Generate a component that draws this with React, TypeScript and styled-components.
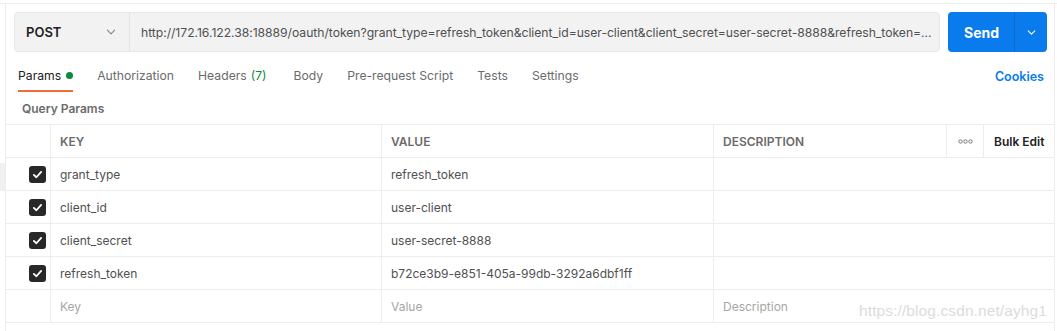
import React from "react";
import styled, { createGlobalStyle } from "styled-components";

const Global = createGlobalStyle`
  html, body { margin: 0; padding: 0; background: #fff; }
  body { font-family: Inter, "Noto Sans", sans-serif; color: #505050; }
  * { box-sizing: border-box; }
`;

const Page = styled.div`
  display: flex;
  width: 1057px;
  height: 328px;
  border-top: 1px solid #ededed;
  margin-top: 3px;
  position: relative;
  overflow: hidden;
`;

const Gutter = styled.div`
  width: 5px;
  flex: none;
  padding-top: 159px;
`;

const GutterPatch = styled.div`
  height: 28px;
  background: #f0f0f0;
`;

const Panel = styled.div`
  width: 1050px;
  flex: none;
  border-left: 1px solid #ededed;
  border-right: 1px solid #ededed;
  display: flex;
  flex-direction: column;
`;

const RequestBar = styled.div`
  display: flex;
  gap: 8px;
  padding: 8px 7px 0 8px;
`;

const UrlBox = styled.div`
  flex: 1;
  height: 40px;
  display: flex;
  background: #f2f2f2;
  border: 1px solid #e8e8e8;
  border-radius: 4px;
  overflow: hidden;
`;

const MethodSelect = styled.div`
  width: 115px;
  flex: none;
  display: flex;
  align-items: center;
  justify-content: space-between;
  padding: 0 12px 0 11px;
  border-right: 1px solid #e3e3e3;
  font-size: 13px;
  font-weight: 600;
  color: #212121;
`;

const UrlText = styled.div`
  flex: 1;
  min-width: 0;
  display: flex;
  align-items: center;
  padding: 0 4px 0 11px;
  font-size: 12.2px;
  letter-spacing: -0.04px;
  color: #505050;
  white-space: nowrap;
  overflow: hidden;
`;

const UrlInner = styled.span`
  overflow: hidden;
  text-overflow: ellipsis;
`;

const SendGroup = styled.div`
  width: 99px;
  height: 40px;
  flex: none;
  display: flex;
  background: #097bed;
  border-radius: 4px;
  color: #fff;
`;

const SendLabel = styled.div`
  flex: 1;
  display: flex;
  align-items: center;
  justify-content: center;
  font-size: 14px;
  font-weight: 700;
  border-right: 1px solid #0a6bcc;
  padding-left: 1px;
`;

const SendArrow = styled.div`
  width: 32px;
  display: flex;
  align-items: center;
  justify-content: center;
`;

const TabRow = styled.div`
  display: flex;
  align-items: stretch;
  height: 40px;
  padding: 0 10px 0 12px;
`;

const Tabs = styled.div`
  display: flex;
  gap: 24px;
  flex: 1;
`;

const Tab = styled.div<{ $active?: boolean }>`
  display: flex;
  align-items: center;
  font-size: 12.2px;
  color: ${(p) => (p.$active ? "#212121" : "#6b6b6b")};
  border-bottom: 2px solid ${(p) => (p.$active ? "#f26b3a" : "transparent")};
  padding-top: 8px;
`;

const Count = styled.span`
  color: #0b8a3d;
  margin-left: 4px;
  margin-right: 3px;
`;

const Dot = styled.span`
  width: 7px;
  height: 7px;
  border-radius: 50%;
  background: #0b8a3d;
  margin-left: 5px;
  margin-top: 1px;
`;

const Cookies = styled.div`
  display: flex;
  align-items: center;
  padding-top: 8px;
  font-size: 12.5px;
  font-weight: 600;
  color: #097bed;
`;

const SectionTitle = styled.div`
  height: 32px;
  display: flex;
  align-items: center;
  padding-left: 16px;
  font-size: 12px;
  font-weight: 600;
  color: #6b6b6b;
`;

const Table = styled.div`
  display: grid;
  grid-template-columns: 45px 331px 332px 233px 37px 1fr;
  border-top: 1px solid #ededed;
`;

const Cell = styled.div<{ $span?: number; $head?: boolean; $last?: boolean }>`
  height: 33px;
  display: flex;
  align-items: center;
  padding-left: 9px;
  border-bottom: 1px solid #ededed;
  border-right: ${(p) => (p.$last ? "none" : "1px solid #ededed")};
  grid-column: span ${(p) => p.$span ?? 1};
  font-size: 12px;
  color: ${(p) => (p.$head ? "#6b6b6b" : "#505050")};
  font-weight: ${(p) => (p.$head ? 600 : 400)};
  white-space: nowrap;
`;

const CheckCell = styled(Cell)`
  justify-content: flex-end;
  padding-left: 0;
  padding-right: 4px;
`;

const Placeholder = styled.span`
  color: #a6a6a6;
`;

const BulkEdit = styled(Cell)`
  color: #212121;
  font-weight: 600;
  padding-left: 10px;
`;

const DotsCell = styled(Cell)`
  justify-content: center;
  padding-left: 0;
`;

const Checkbox = styled.div`
  width: 17px;
  height: 17px;
  border-radius: 3px;
  background: #282828;
  display: flex;
  align-items: center;
  justify-content: center;
`;

const Watermark = styled.div`
  position: absolute;
  right: 10px;
  top: 298px;
  font-family: "Liberation Sans", Arial, sans-serif;
  font-size: 15.5px;
  color: #dcdcdc;
  letter-spacing: 0.1px;
`;

const Chevron = ({ color, size }: { color: string; size: number }) => (
  <svg width={size} height={size} viewBox="0 0 10 10" fill="none">
    <path d="M2 3.5 L5 6.5 L8 3.5" stroke={color} strokeWidth="1" strokeLinecap="round" strokeLinejoin="round" />
  </svg>
);

const Check = () => (
  <svg width="11" height="11" viewBox="0 0 12 12" fill="none">
    <path d="M2 6.4 L4.8 9 L10 3.2" stroke="#fff" strokeWidth="2" strokeLinecap="round" strokeLinejoin="round" />
  </svg>
);

const Dots = () => (
  <svg width="15" height="5" viewBox="0 0 15 5" fill="none">
    <circle cx="2.5" cy="2.5" r="1.7" stroke="#6b6b6b" strokeWidth="0.9" />
    <circle cx="7.5" cy="2.5" r="1.7" stroke="#6b6b6b" strokeWidth="0.9" />
    <circle cx="12.5" cy="2.5" r="1.7" stroke="#6b6b6b" strokeWidth="0.9" />
  </svg>
);

const params = [
  { key: "grant_type", value: "refresh_token" },
  { key: "client_id", value: "user-client" },
  { key: "client_secret", value: "user-secret-8888" },
  { key: "refresh_token", value: "b72ce3b9-e851-405a-99db-3292a6dbf1ff" },
];

export default function App() {
  return (
    <>
      <Global />
      <Page>
        <Gutter>
          <GutterPatch />
        </Gutter>
        <Panel>
          <RequestBar>
            <UrlBox>
              <MethodSelect>
                POST
                <Chevron color="#8a8a8a" size={12} />
              </MethodSelect>
              <UrlText>
                <UrlInner>
                  http://172.16.122.38:18889/oauth/token?grant_type=refresh_token&amp;client_id=user-client&amp;client_secret=user-secret-8888&amp;refresh_token=...
                </UrlInner>
              </UrlText>
            </UrlBox>
            <SendGroup>
              <SendLabel>Send</SendLabel>
              <SendArrow>
                <Chevron color="#ffffff" size={11} />
              </SendArrow>
            </SendGroup>
          </RequestBar>
          <TabRow>
            <Tabs>
              <Tab $active>
                Params
                <Dot />
              </Tab>
              <Tab>Authorization</Tab>
              <Tab>
                Headers<Count>(7)</Count>
              </Tab>
              <Tab>Body</Tab>
              <Tab>Pre-request Script</Tab>
              <Tab>Tests</Tab>
              <Tab>Settings</Tab>
            </Tabs>
            <Cookies>Cookies</Cookies>
          </TabRow>
          <SectionTitle>Query Params</SectionTitle>
          <Table>
            <Cell />
            <Cell $head>KEY</Cell>
            <Cell $head>VALUE</Cell>
            <Cell $head>DESCRIPTION</Cell>
            <DotsCell>
              <Dots />
            </DotsCell>
            <BulkEdit $last>Bulk Edit</BulkEdit>
            {params.map((p) => (
              <React.Fragment key={p.key}>
                <CheckCell>
                  <Checkbox>
                    <Check />
                  </Checkbox>
                </CheckCell>
                <Cell>{p.key}</Cell>
                <Cell>{p.value}</Cell>
                <Cell $span={3} $last />
              </React.Fragment>
            ))}
            <Cell />
            <Cell>
              <Placeholder>Key</Placeholder>
            </Cell>
            <Cell>
              <Placeholder>Value</Placeholder>
            </Cell>
            <Cell $span={3} $last>
              <Placeholder>Description</Placeholder>
            </Cell>
          </Table>
        </Panel>
        <Watermark>https://blog.csdn.net/ayhg1</Watermark>
      </Page>
    </>
  );
}
